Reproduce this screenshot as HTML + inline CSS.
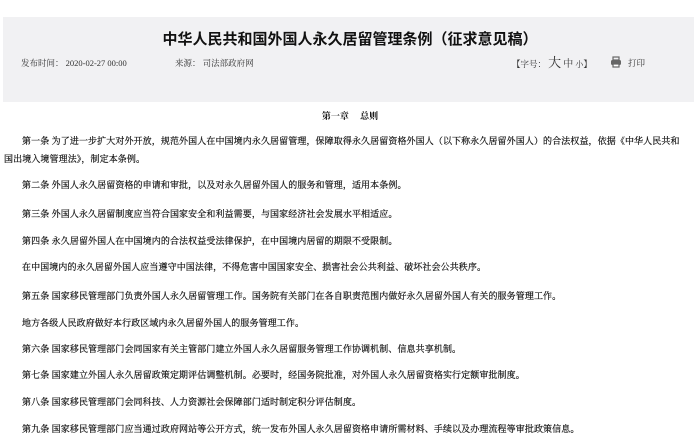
<!DOCTYPE html>
<html><head><meta charset="utf-8"><style>
body{margin:0;width:700px;height:443px;background:#fff;overflow:hidden;font-family:"Liberation Serif","Noto Serif CJK SC",serif;color:#111;position:relative}
.hd{position:absolute;left:3px;top:17px;width:691px;height:85px;background:#f1f1f3}
.t{position:absolute;left:0;width:700px;top:28px;text-align:center;font:bold 15px "Liberation Sans","Noto Sans CJK SC",sans-serif;color:#111}
.m{position:absolute;top:57px;font-size:8.5px;color:#333;line-height:12px}
.p{position:absolute;left:4px;width:680px;font-size:9px;line-height:18px;letter-spacing:0.1px;text-indent:18px;margin:0;-webkit-text-stroke:0.2px #111}
</style></head><body>
<div class="hd"></div>
<div class="t">中华人民共和国外国人永久居留管理条例（征求意见稿）</div>
<div class="m" style="left:21px">发布时间： 2020-02-27 00:00</div>
<div class="m" style="left:175px">来源： 司法部政府网</div>
<div class="m" style="left:512px">【字号： <span style="font-size:13px">大</span> <span style="font-size:10px">中</span> <span style="font-size:8px">小</span>】</div>
<svg style="position:absolute;left:610px;top:56px" width="12" height="12" viewBox="0 0 12 12"><rect x="3" y="1" width="6" height="3" fill="none" stroke="#666" stroke-width="1.2"/><rect x="1" y="4" width="10" height="5" rx="1.5" fill="#666"/><rect x="3" y="8" width="6" height="3" fill="#fff" stroke="#666" stroke-width="1.2"/></svg>
<div class="m" style="left:628px">打印</div>
<div style="position:absolute;left:0;width:700px;top:109px;text-align:center;font-size:9px;font-weight:bold">第一章　 总则</div>
<p class="p" style="top:132px">第一条 为了进一步扩大对外开放，规范外国人在中国境内永久居留管理，保障取得永久居留资格外国人（以下称永久居留外国人）的合法权益，依据《中华人民共和国出境入境管理法》，制定本条例。</p>
<p class="p" style="top:176px">第二条 外国人永久居留资格的申请和审批，以及对永久居留外国人的服务和管理，适用本条例。</p>
<p class="p" style="top:205px">第三条 外国人永久居留制度应当符合国家安全和利益需要，与国家经济社会发展水平相适应。</p>
<p class="p" style="top:232px">第四条 永久居留外国人在中国境内的合法权益受法律保护，在中国境内居留的期限不受限制。</p>
<p class="p" style="top:258px">在中国境内的永久居留外国人应当遵守中国法律，不得危害中国国家安全、损害社会公共利益、破坏社会公共秩序。</p>
<p class="p" style="top:287px">第五条 国家移民管理部门负责外国人永久居留管理工作。国务院有关部门在各自职责范围内做好永久居留外国人有关的服务管理工作。</p>
<p class="p" style="top:314px">地方各级人民政府做好本行政区域内永久居留外国人的服务管理工作。</p>
<p class="p" style="top:340px">第六条 国家移民管理部门会同国家有关主管部门建立外国人永久居留服务管理工作协调机制、信息共享机制。</p>
<p class="p" style="top:366px">第七条 国家建立外国人永久居留政策定期评估调整机制。必要时，经国务院批准，对外国人永久居留资格实行定额审批制度。</p>
<p class="p" style="top:393px">第八条 国家移民管理部门会同科技、人力资源社会保障部门适时制定积分评估制度。</p>
<p class="p" style="top:420px">第九条 国家移民管理部门应当通过政府网站等公开方式，统一发布外国人永久居留资格申请所需材料、手续以及办理流程等审批政策信息。</p>
</body></html>
